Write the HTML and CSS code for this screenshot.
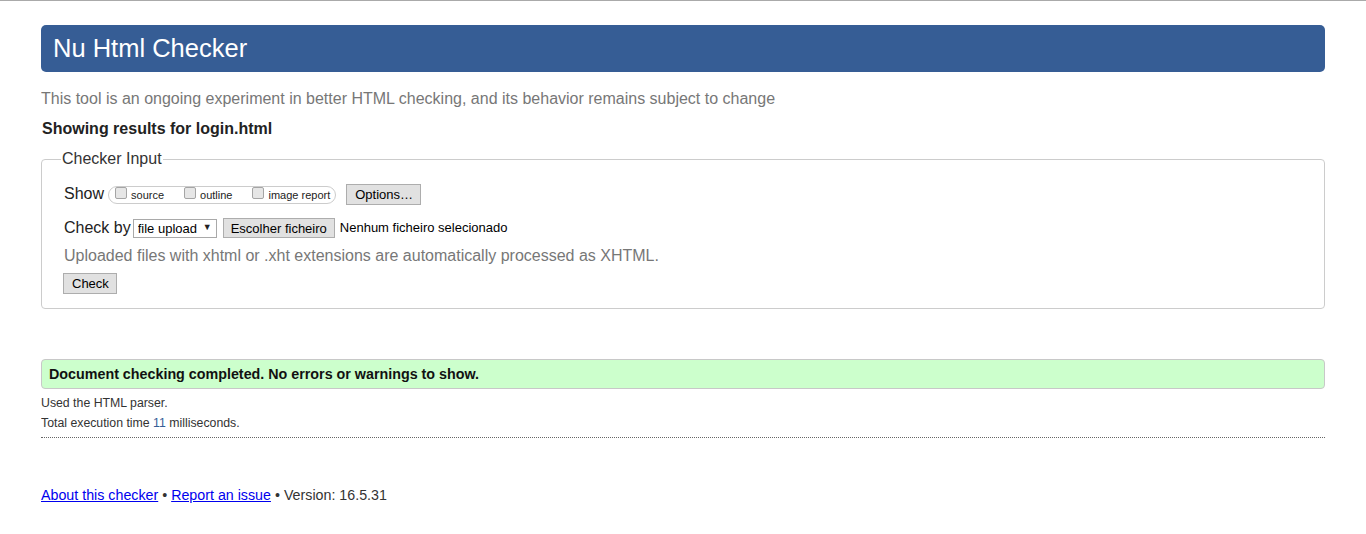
FILE: index.html
```html
<!DOCTYPE html>
<html lang="en">
<head>
<meta charset="utf-8">
<title>Showing results for login.html - Nu Html Checker</title>
<link rel="stylesheet" href="styles.css">
</head>
<body>
<h1 class="title">Nu Html Checker</h1>
<p class="intro">This tool is an ongoing experiment in better HTML checking, and its behavior remains subject to change</p>
<p class="showing">Showing results for login.html</p>
<form class="form">
  <fieldset class="inputs">
    <legend class="legend">Checker Input</legend>
    <div class="row row-show">
      <span class="label">Show</span>
      <span class="checks">
        <label class="check"><input type="checkbox" class="cb"><span>source</span></label>
        <label class="check"><input type="checkbox" class="cb"><span>outline</span></label>
        <label class="check"><input type="checkbox" class="cb"><span>image report</span></label>
      </span>
      <button type="button" class="btn btn-options">Options…</button>
    </div>
    <div class="row row-by">
      <span class="label">Check by</span>
      <span class="select-wrap">
        <select class="select"><option>file upload</option></select>
      </span>
      <button type="button" class="btn btn-file">Escolher ficheiro</button>
      <span class="nofile">Nenhum ficheiro selecionado</span>
    </div>
    <p class="note">Uploaded files with xhtml or .xht extensions are automatically processed as XHTML.</p>
    <button type="button" class="btn btn-check">Check</button>
  </fieldset>
</form>
<p class="success">Document checking completed. No errors or warnings to show.</p>
<div class="details">
  <p class="detail">Used the HTML parser.</p>
  <p class="detail">Total execution time <span class="num">11</span> milliseconds.</p>
</div>
<p class="footer"><a href="#">About this checker</a> • <a href="#">Report an issue</a> • Version: 16.5.31</p>
</body>
</html>
```

FILE: styles.css
```css
html {
  border-top: 1px solid #aaaaaa;
  background: #ffffff;
}
body {
  margin: 0 41px;
  font-family: "Liberation Sans", Arial, sans-serif;
  font-size: 16px;
  line-height: 20px;
  color: #222222;
}
.title {
  margin: 24px 0 0;
  height: 47px;
  padding: 0 12px;
  line-height: 47px;
  font-size: 25.5px;
  font-weight: normal;
  color: #ffffff;
  background: #365d95;
  border-radius: 5px;
}
.intro {
  margin: 17px 0 0;
  color: #777777;
}
.showing {
  margin: 10px 0 0 1px;
  font-weight: bold;
}
.form {
  margin: 10px 0 0;
}
.inputs {
  margin: 0;
  padding: 11px 21px 14px 22px;
  border: 1px solid #cccccc;
  border-radius: 4px;
  min-width: 0;
}
.legend {
  padding: 0 1px;
  margin-left: -3px;
  color: #333333;
}
.row {
  display: flex;
  align-items: center;
  height: 22px;
}
.row-show {
  margin-top: 3px;
}
.row-by {
  margin-top: 12px;
}
.label {
  margin-right: 4px;
}
.checks {
  display: inline-flex;
  align-items: center;
  height: 16px;
  border: 1px solid #cccccc;
  border-radius: 9px;
  padding: 0 5px 0 6px;
  margin-top: 1px;
}
.check {
  display: inline-flex;
  align-items: center;
  font-size: 11px;
  margin-right: 20px;
}
.check:last-child {
  margin-right: 0;
}
.cb {
  appearance: none;
  -webkit-appearance: none;
  width: 12px;
  height: 12px;
  margin: -3px 4px 0 0;
  border: 1px solid #a5a5a5;
  border-radius: 2px;
  background: #e6e6e6;
}
.btn {
  font-family: "Liberation Sans", Arial, sans-serif;
  font-size: 13px;
  color: #000000;
  background: #e1e1e1;
  border: 1px solid #adadad;
  border-radius: 0;
  padding: 0 7px;
  line-height: 19px;
  height: 21px;
}
.btn-options {
  margin-left: 10px;
  padding: 0 7px 0 8px;
}
.select-wrap {
  position: relative;
  display: inline-block;
  margin-left: -2px;
}
.select-wrap::after {
  content: "▼";
  position: absolute;
  right: 5px;
  top: 3px;
  font-size: 9px;
  line-height: 12px;
  pointer-events: none;
}
.select {
  appearance: none;
  -webkit-appearance: none;
  font-family: "Liberation Sans", Arial, sans-serif;
  font-size: 13px;
  color: #000000;
  height: 19px;
  width: 84px;
  padding: 0 0 0 4px;
  border: 1px solid #a9a9a9;
  border-radius: 0;
  background: #ffffff;
}
.btn-file {
  margin-left: 6px;
  height: 20px;
  padding: 0 7px;
}
.nofile {
  font-size: 13px;
  margin-left: 5px;
  color: #000000;
}
.note {
  margin: 7px 0 0;
  color: #777777;
}
.btn-check {
  margin: 7px 0 0 -1px;
  height: 21px;
  padding: 0 7px 0 8px;
}
.success {
  margin: 50px 0 0;
  height: 28px;
  line-height: 28px;
  padding: 0 7px;
  font-size: 14.3px;
  font-weight: bold;
  color: #111111;
  background: #ccffcc;
  border: 1px solid #c8c8c8;
  border-radius: 4px;
}
.details {
  border-bottom: 1px dotted #666666;
  padding: 4px 0 4px;
}
.detail {
  margin: 0;
  font-size: 12.3px;
  line-height: 20px;
  color: #333333;
}
.num {
  color: #365d95;
}
.footer {
  margin: 47px 0 0;
  font-size: 14.25px;
  color: #333333;
}
.footer a {
  color: #0000ee;
}
```
